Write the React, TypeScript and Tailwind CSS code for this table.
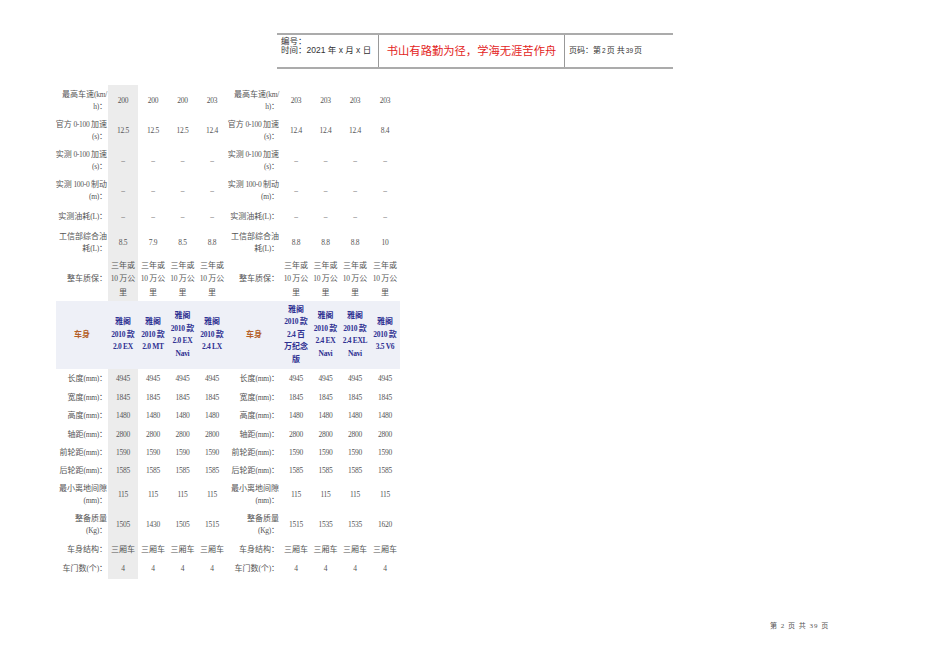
import React from "react";

type Row = {
  label: string;
  left: string[];
  right: string[];
  h: string;
  lh?: string;
};

const dash = ["–", "–", "–", "–"];
const same = (v: string) => [v, v, v, v];
const warranty = same("三年或\n10 万公\n里");

const topRows: Row[] = [
  { label: "最高车速(km/\nh)：", left: ["200", "200", "200", "203"], right: same("203"), h: "h-[31px]" },
  { label: "官方 0-100 加速\n(s)：", left: ["12.5", "12.5", "12.5", "12.4"], right: ["12.4", "12.4", "12.4", "8.4"], h: "h-[30px]" },
  { label: "实测 0-100 加速\n(s)：", left: dash, right: dash, h: "h-[30px]" },
  { label: "实测 100-0 制动\n(m)：", left: dash, right: dash, h: "h-[30px]" },
  { label: "实测油耗(L)：", left: dash, right: dash, h: "h-[22px]" },
  { label: "工信部综合油\n耗(L)：", left: ["8.5", "7.9", "8.5", "8.8"], right: ["8.8", "8.8", "8.8", "10"], h: "h-[29px]" },
  { label: "整车质保：", left: warranty, right: warranty, h: "h-[44px]", lh: "leading-[13.5px]" },
];

const bottomRows: Row[] = [
  { label: "长度(mm)：", left: same("4945"), right: same("4945"), h: "h-[20px]" },
  { label: "宽度(mm)：", left: same("1845"), right: same("1845"), h: "h-[18px]" },
  { label: "高度(mm)：", left: same("1480"), right: same("1480"), h: "h-[18px]" },
  { label: "轴距(mm)：", left: same("2800"), right: same("2800"), h: "h-[19px]" },
  { label: "前轮距(mm)：", left: same("1590"), right: same("1590"), h: "h-[18px]" },
  { label: "后轮距(mm)：", left: same("1585"), right: same("1585"), h: "h-[18px]" },
  { label: "最小离地间隙\n(mm)：", left: same("115"), right: same("115"), h: "h-[30px]" },
  { label: "整备质量\n(Kg)：", left: ["1505", "1430", "1505", "1515"], right: ["1515", "1535", "1535", "1620"], h: "h-[30px]" },
  { label: "车身结构：", left: same("三厢车"), right: same("三厢车"), h: "h-[19px]" },
  { label: "车门数(个)：", left: same("4"), right: same("4"), h: "h-[20px]" },
];

const headLeft = ["雅阁\n2010 款\n2.0 EX", "雅阁\n2010 款\n2.0 MT", "雅阁\n2010 款\n2.0 EX\nNavi", "雅阁\n2010 款\n2.4 LX"];
const headRight = ["雅阁\n2010 款\n2.4 百\n万纪念\n版", "雅阁\n2010 款\n2.4 EX\nNavi", "雅阁\n2010 款\n2.4 EXL\nNavi", "雅阁\n2010 款\n3.5 V6"];

// latin runs are set slightly condensed, like the half-width glyphs of a Song face
function Mix({ text }: { text: string }) {
  return (
    <>
      {text.split(/([\x20-\x7e–]+)/).map((part, i) =>
        /[\x20-\x7e–]/.test(part) ? (
          <span key={i} className="text-[7.5px] tracking-[-0.3px]">{part}</span>
        ) : (
          part
        )
      )}
    </>
  );
}

function Lines({ text, align, lh }: { text: string; align: string; lh: string }) {
  return (
    <div className={`flex flex-col whitespace-nowrap ${align} ${lh}`}>
      {text.split("\n").map((t, i) => (
        <span key={i}>
          <Mix text={t} />
        </span>
      ))}
    </div>
  );
}

function DataRow({ row }: { row: Row }) {
  const lh = row.lh ?? "leading-[12px]";
  return (
    <tr className={row.h}>
      <td className="pr-[1px]">
        <Lines text={row.label} align="items-end" lh="leading-[12px]" />
      </td>
      {row.left.map((v, i) => (
        <td key={i} className={i === 0 ? "bg-[#ececec]" : ""}>
          <Lines text={v} align="items-center" lh={lh} />
        </td>
      ))}
      <td className="pr-[2px]">
        <Lines text={row.label} align="items-end" lh="leading-[12px]" />
      </td>
      {row.right.map((v, i) => (
        <td key={i}>
          <Lines text={v} align="items-center" lh={lh} />
        </td>
      ))}
    </tr>
  );
}

export default function App() {
  return (
    <div className="w-[950px] h-[672px] bg-white overflow-hidden font-['Liberation_Serif','Noto_Sans_CJK_SC',serif] text-[#555]">
      <div className="pt-[33px] pl-[277px]">
        <div className="flex w-[396px] h-[36px] border-y-2 border-[#ababab] font-['Liberation_Sans','Noto_Sans_CJK_SC',sans-serif]">
          <div className="w-[101px] pl-[4px] pt-[2px] text-[8.5px] leading-[9px] text-[#333]">
            <div>编号：</div>
            <div>时间：2021 年 x 月 x 日</div>
          </div>
          <div className="w-[186px] border-l border-[#999] flex items-center justify-center text-[11.3px] text-[#e3231c]">
            书山有路勤为径，学海无涯苦作舟
          </div>
          <div className="flex-1 border-l border-[#999] flex items-center pl-[4px] text-[8px] text-[#333]">
            页码：第 <span className="text-[6.5px] mx-[1px]">2</span> 页 共 <span className="text-[6.5px] mx-[1px]">39</span> 页
          </div>
        </div>
      </div>

      <table className="ml-[56px] mt-[16px] table-fixed border-collapse w-[344px] text-[8px]">
        <colgroup>
          <col className="w-[52px]" />
          <col className="w-[30px]" />
          <col className="w-[30px]" />
          <col className="w-[29px]" />
          <col className="w-[30px]" />
          <col className="w-[54px]" />
          <col className="w-[30px]" />
          <col className="w-[29px]" />
          <col className="w-[30px]" />
          <col className="w-[30px]" />
        </colgroup>
        <tbody>
          {topRows.map((r, i) => (
            <DataRow key={i} row={r} />
          ))}
          <tr className="h-[68px] bg-[#eef0f7] font-bold">
            <td className="text-center text-[#b5602a]">车身</td>
            {headLeft.map((v, i) => (
              <td key={i} className="text-[#2e3192]">
                <Lines text={v} align="items-center" lh="leading-[12.5px]" />
              </td>
            ))}
            <td className="text-center text-[#b5602a]">车身</td>
            {headRight.map((v, i) => (
              <td key={i} className="text-[#2e3192]">
                <Lines text={v} align="items-center" lh="leading-[12.5px]" />
              </td>
            ))}
          </tr>
          {bottomRows.map((r, i) => (
            <DataRow key={i} row={r} />
          ))}
        </tbody>
      </table>

      <div className="mt-[42px] ml-[770px] text-[7px] text-[#555] tracking-[1px]">第 2 页 共 39 页</div>
    </div>
  );
}
